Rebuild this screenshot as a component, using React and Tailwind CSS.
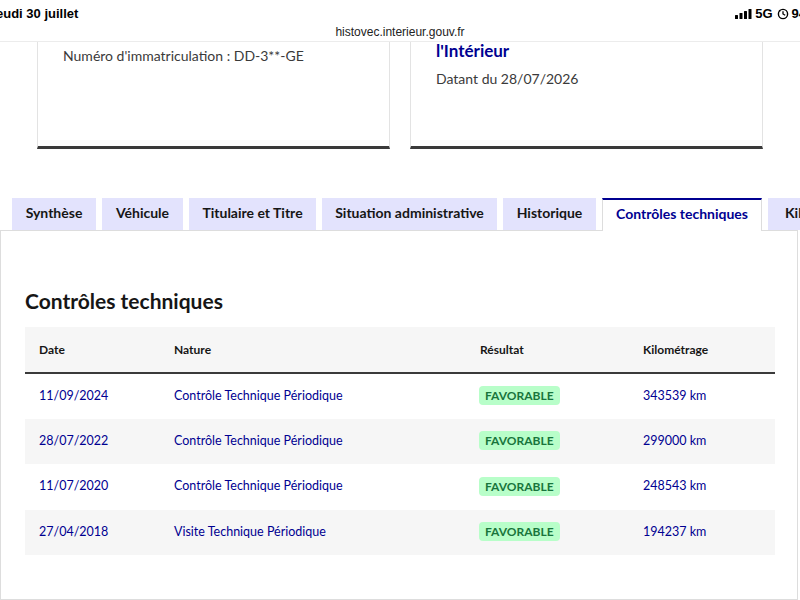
const tabs = [
  { label: "Synthèse", w: "w-[84px]" },
  { label: "Véhicule", w: "w-[81px]" },
  { label: "Titulaire et Titre", w: "w-[127px]" },
  { label: "Situation administrative", w: "w-[175px]" },
  { label: "Historique", w: "w-[93px]" },
  { label: "Contrôles techniques", w: "w-[160px]", active: true },
  { label: "Kilométrage", w: "w-[110px]" },
];

const rows = [
  { date: "11/09/2024", nature: "Contrôle Technique Périodique", km: "343539 km" },
  { date: "28/07/2022", nature: "Contrôle Technique Périodique", km: "299000 km" },
  { date: "11/07/2020", nature: "Contrôle Technique Périodique", km: "248543 km" },
  { date: "27/04/2018", nature: "Visite Technique Périodique", km: "194237 km" },
];

function StatusBar() {
  return (
    <div className="h-[42px] bg-white border-b border-[#ececec] relative font-['Liberation_Sans',sans-serif]">
      <div className="absolute left-[-4px] top-[4px] text-[13px] font-semibold text-black">eudi 30 juillet</div>
      <div className="absolute right-[-6px] top-[4px] flex items-center gap-[3px] text-[13px] font-semibold text-black">
        <svg width="17" height="10" viewBox="0 0 17 10">
          <rect x="0" y="6" width="3" height="4" rx="0.5" fill="#000" />
          <rect x="4.5" y="4" width="3" height="6" rx="0.5" fill="#000" />
          <rect x="9" y="2" width="3" height="8" rx="0.5" fill="#000" />
          <rect x="13.5" y="0" width="3" height="10" rx="0.5" fill="#000" />
        </svg>
        <span>5G</span>
        <svg width="12" height="12" viewBox="0 0 12 12" className="ml-[1px]">
          <circle cx="6" cy="6" r="4.6" fill="none" stroke="#000" strokeWidth="1.4" />
          <path d="M6 3.2 L6 6 L8.2 7.3" stroke="#000" strokeWidth="1.3" fill="none" />
          <path d="M1.5 3 L3.2 1.6 L3.4 3.8 Z" fill="#000" />
        </svg>
        <span>94</span>
      </div>
      <div className="absolute left-0 right-0 top-[23px] text-center text-[12px] text-[#222]">
        histovec.interieur.gouv.fr
      </div>
    </div>
  );
}

export default function App() {
  return (
    <div className="w-[800px] h-[600px] overflow-hidden bg-white relative font-['Lato',sans-serif] text-[#161616]">
      <StatusBar />

      <div className="flex gap-[20px] pl-[37px]">
        <div className="w-[353px] h-[107px] border-x border-[#e3e3e3] border-b-[3px] border-b-[#3a3a3a] px-[25px] pt-[3px]">
          <div className="text-[14px] text-[#3a3a3a]">Numéro d'immatriculation : DD-3**-GE</div>
        </div>
        <div className="w-[353px] h-[107px] border-x border-[#e3e3e3] border-b-[3px] border-b-[#3a3a3a] px-[25px]">
          <div className="text-[17px] font-bold text-[#000091] leading-[18px]">l'Intérieur</div>
          <div className="text-[14px] text-[#3a3a3a] mt-[8px]">Datant du 28/07/2026</div>
        </div>
      </div>

      <div className="mt-[49px] flex gap-[6px] pl-[12px] relative z-10">
        {tabs.map((t) =>
          t.active ? (
            <div
              key={t.label}
              className={`${t.w} shrink-0 h-[33px] -mb-px pb-[5px] bg-white border-t-2 border-t-[#000091] border-x border-[#dddddd] flex items-center justify-center text-[14px] font-bold text-[#000091]`}
            >
              {t.label}
            </div>
          ) : (
            <div
              key={t.label}
              className={`${t.w} shrink-0 h-[32px] pb-[3px] bg-[#e3e3fd] flex items-center justify-center text-[14px] font-bold text-[#161616]`}
            >
              {t.label}
            </div>
          )
        )}
      </div>

      <div className="w-[798px] h-[370px] border border-[#dddddd] px-[24px] pt-[56px]">
        <h2 className="text-[21px] font-bold text-[#161616] leading-[28px]">Contrôles techniques</h2>
        <table className="mt-[12px] w-[750px] table-fixed text-[12.5px] border-collapse">
          <thead>
            <tr className="bg-[#f6f6f6] h-[46px] border-b-2 border-[#3a3a3a]">
              <th className="text-left font-bold pl-[14px] w-[149px] text-[12px]">Date</th>
              <th className="text-left font-bold w-[306px] text-[12px]">Nature</th>
              <th className="text-left font-bold w-[163px] text-[12px]">Résultat</th>
              <th className="text-left font-bold text-[12px]">Kilométrage</th>
            </tr>
          </thead>
          <tbody>
            {rows.map((r, i) => (
              <tr key={r.date} className={`h-[45.5px] ${i % 2 === 1 ? "bg-[#f6f6f6]" : "bg-white"}`}>
                <td className="pl-[14px] text-[#000091]">{r.date}</td>
                <td className="text-[#000091]">{r.nature}</td>
                <td>
                  <span className="inline-block -ml-[1px] bg-[#b8fec9] text-[#18753c] font-bold text-[12px] leading-[19px] px-[6px] rounded-[4px]">
                    FAVORABLE
                  </span>
                </td>
                <td className="text-[#000091]">{r.km}</td>
              </tr>
            ))}
          </tbody>
        </table>
      </div>
    </div>
  );
}
